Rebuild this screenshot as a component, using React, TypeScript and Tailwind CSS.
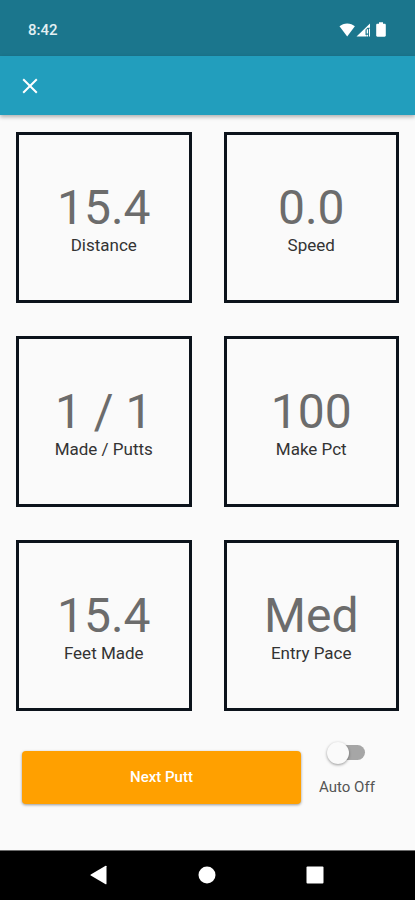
import { useState } from "react";

type Stat = {
  value: string;
  label: string;
};

const stats: Stat[] = [
  { value: "15.4", label: "Distance" },
  { value: "0.0", label: "Speed" },
  { value: "1 / 1", label: "Made / Putts" },
  { value: "100", label: "Make Pct" },
  { value: "15.4", label: "Feet Made" },
  { value: "Med", label: "Entry Pace" },
];

// Android status bar
const StatusBar = () => {
  return (
    <div className="flex h-14 items-center justify-between bg-[#1b768d] pt-1 pr-7 pl-7 text-white">
      <span className="text-[15px] leading-5 font-medium text-[#e3f0f3]">
        8:42
      </span>
      <svg width="48" height="16" viewBox="0 0 48 16" fill="currentColor">
        {/* Wifi */}
        <path d="M0.5 4.2C2.5 2.5 5.2 1.4 8.2 1.4s5.7 1.1 7.7 2.8L8.2 14.4Z" />
        {/* Signal */}
        <path d="M17.5 14.6 31 1.4v4.3h-2.5L26.5 7.7v5.3h1v1.6Z" />
        <path d="M27.7 7.2h1.4v4.2h-1.4zM27.7 12.8h1.4v1.8h-1.4zM30 6.4h1v8.2h-1z" />
        {/* Battery */}
        <path d="M40 0.3h4v1.5h1.6c0.7 0 1.2 0.5 1.2 1.2v10.6c0 0.7-0.5 1.2-1.2 1.2h-7.2c-0.7 0-1.2-0.5-1.2-1.2V3c0-0.7 0.5-1.2 1.2-1.2H40Z" />
      </svg>
    </div>
  );
};

const AppBar = () => {
  return (
    <header className="flex h-[59px] items-center bg-[#229ebd] px-[18px] text-white shadow-[0_2px_4px_rgba(0,0,0,0.3)]">
      <button type="button" aria-label="Close">
        <svg
          width="24"
          height="24"
          viewBox="0 0 24 24"
          fill="none"
          stroke="currentColor"
          strokeWidth="2"
        >
          <path d="M5.2 5.2 18.8 18.8M18.8 5.2 5.2 18.8" />
        </svg>
      </button>
    </header>
  );
};

// Single stat tile
const StatCard = (props: Stat) => {
  const { value, label } = props;
  return (
    <div className="flex h-[171px] flex-col items-center justify-center border-3 border-[#0c131b] pb-0.5">
      <p className="text-5xl leading-[56px] text-[#6c6c6c]">{value}</p>
      <p className="text-[17px] leading-[18px] text-[#333333]">{label}</p>
    </div>
  );
};

const AutoSwitch = () => {
  const [auto, setAuto] = useState(false);

  return (
    <label className="flex w-14 flex-col items-center gap-[17px]">
      <input
        type="checkbox"
        role="switch"
        checked={auto}
        onChange={(e) => setAuto(e.target.checked)}
        className="flex h-[15px] w-9 appearance-none items-center rounded-full bg-[#a6a6a6] before:-ml-0.5 before:block before:size-[22px] before:shrink-0 before:rounded-full before:bg-[#fafafa] before:shadow-[0_1px_3px_rgba(0,0,0,0.4)] checked:bg-[#91cfde] checked:before:ml-4 checked:before:bg-[#229ebd]"
      />
      <span className="text-[15px] leading-5 whitespace-nowrap text-[#555555]">
        {auto ? "Auto On" : "Auto Off"}
      </span>
    </label>
  );
};

// Android navigation bar
const NavBar = () => {
  return (
    <nav className="mt-auto flex h-[50px] items-center justify-around border-t border-[#6b6b6b] bg-black px-[46px] pb-px text-white">
      <button type="button" aria-label="Back">
        <svg width="20" height="20" viewBox="0 0 20 20" fill="currentColor">
          <path d="M16.5 1.3v17.4c0 0.5-0.5 0.7-0.9 0.5L0.8 10.6c-0.5-0.3-0.5-0.9 0-1.2L15.6 0.8c0.4-0.2 0.9 0 0.9 0.5Z" />
        </svg>
      </button>
      <button type="button" aria-label="Home">
        <svg width="20" height="20" viewBox="0 0 20 20" fill="currentColor">
          <circle cx="10" cy="10" r="8.5" />
        </svg>
      </button>
      <button type="button" aria-label="Recent apps">
        <svg width="20" height="20" viewBox="0 0 20 20" fill="currentColor">
          <rect x="1.5" y="1.5" width="17" height="17" rx="1" />
        </svg>
      </button>
    </nav>
  );
};

const App = () => {
  return (
    <div className="flex min-h-screen flex-col bg-[#fafafa] font-['Roboto',sans-serif]">
      <StatusBar />
      <AppBar />
      <main className="px-4 pt-[17px] pb-6">
        <div className="grid grid-cols-2 gap-x-8 gap-y-[33px]">
          {stats.map((stat) => (
            <StatCard key={stat.label} {...stat} />
          ))}
        </div>
        <div className="flex items-start gap-[18px] pt-[34px] pr-6 pl-1.5">
          <button
            type="button"
            className="mt-1.5 h-[53px] flex-1 rounded bg-[#ffa000] text-[15px] font-medium text-white shadow-[0_1px_3px_rgba(0,0,0,0.4)]"
          >
            Next Putt
          </button>
          <AutoSwitch />
        </div>
      </main>
      <NavBar />
    </div>
  );
};

export default App;
